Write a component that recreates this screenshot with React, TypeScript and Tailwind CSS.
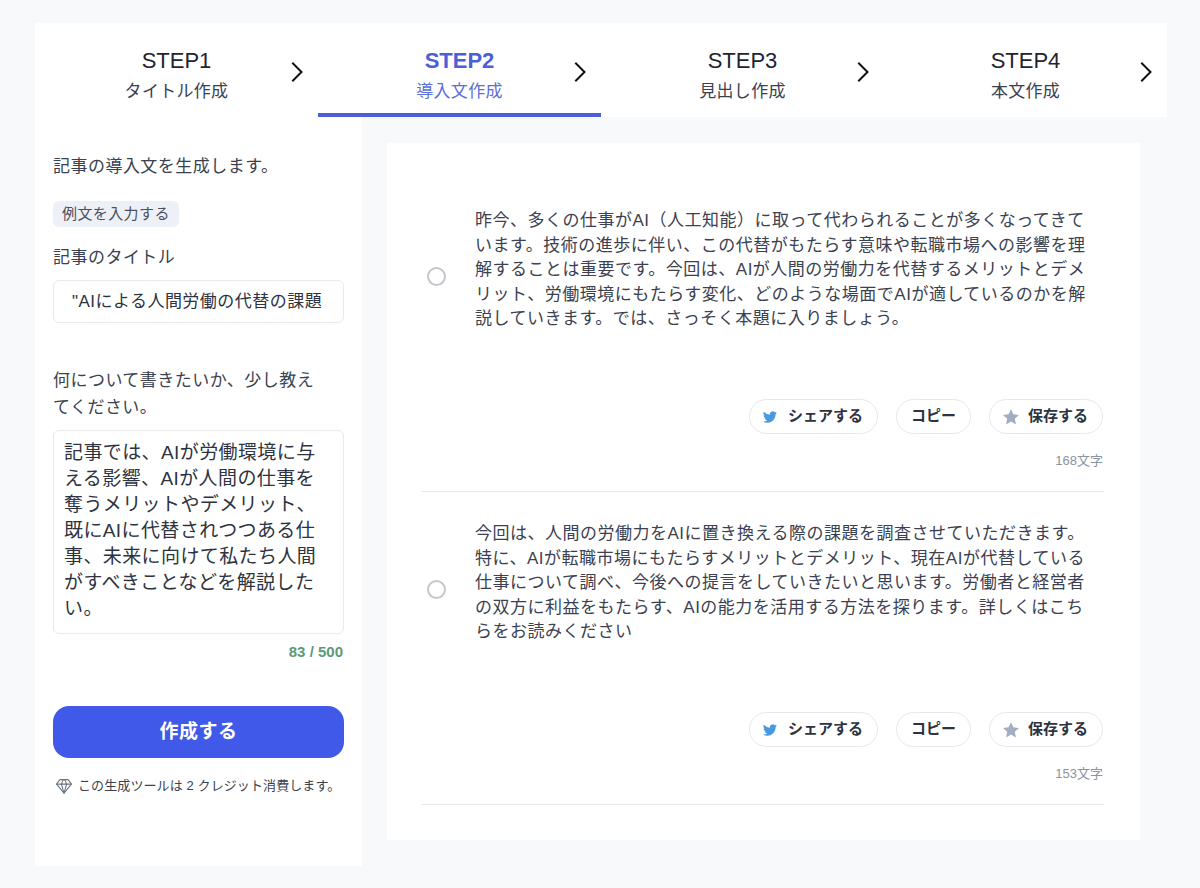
import React from "react";

const font = { fontFamily: '"Liberation Sans","Noto Sans CJK JP",sans-serif' };

function Twitter() {
  return (
    <svg viewBox="0 0 24 24" className="w-[14px] h-[14px] ml-[0.5px] mr-[1.5px]" fill="#4a99e0">
      <path d="M23.95 4.57a10 10 0 0 1-2.82.77 4.96 4.96 0 0 0 2.16-2.72c-.95.55-2 .96-3.12 1.19a4.92 4.92 0 0 0-8.38 4.48A13.98 13.98 0 0 1 1.64 3.16a4.92 4.92 0 0 0 1.52 6.57 4.9 4.9 0 0 1-2.23-.61v.06a4.92 4.92 0 0 0 3.95 4.83 4.99 4.99 0 0 1-2.21.08 4.94 4.94 0 0 0 4.6 3.42A9.87 9.87 0 0 1 0 19.54a13.94 13.94 0 0 0 7.55 2.21c9.05 0 14-7.5 14-13.98 0-.21 0-.42-.02-.63a9.94 9.94 0 0 0 2.46-2.55z" />
    </svg>
  );
}

function Star() {
  return (
    <svg viewBox="2 2 20 20" className="w-[16px] h-[16px]" fill="#a0aec0">
      <path d="M12 2.200l2.950 6.500 7.050.8-5.250 4.750 1.450 7L12 17.700l-6.200 3.550 1.450-7L2 9.500l7.050-.8z" />
    </svg>
  );
}

function Chevron() {
  return (
    <svg viewBox="0 0 24 24" className="w-[24px] h-[24px]" fill="none" stroke="#111" strokeWidth="2" strokeLinecap="square" strokeLinejoin="miter">
      <path d="M8 3.500l8.500 8.500L8 20.500" />
    </svg>
  );
}

function Diamond() {
  return (
    <svg viewBox="0 0 24 24" className="w-[18px] h-[18px] shrink-0" fill="none" stroke="#6b7280" strokeWidth="1.4" strokeLinejoin="round">
      <path d="M6.500 3.500h11L22 9.500 12 21.500 2 9.500z" />
      <path d="M2 9.500h20M8.500 9.500L12 21.500l3.500-12M8.500 9.500L11 3.500M15.500 9.500L13 3.500" />
    </svg>
  );
}

function Step({ n, label, active }: { n: string; label: string; active?: boolean }) {
  return (
    <div className={`relative flex-1 h-full flex flex-col items-center pt-[22px] ${active ? "border-b-4 border-[#4a5fd8]" : ""}`}>
      <div className={`text-[22px] leading-[32px] ${active ? "font-bold text-[#4a5fd8]" : "text-[#1f2430]"}`}>{n}</div>
      <div className={`mt-[2px] text-[17px] leading-[26px] tracking-[0.3px] ${active ? "text-[#5a6fd8]" : "text-[#3b4150]"}`}>{label}</div>
      <div className="absolute right-[9.5px] top-[37px]"><Chevron /></div>
    </div>
  );
}

function Pill({ children, className }: { children: React.ReactNode; className: string }) {
  return (
    <button className={`h-[35px] rounded-full border border-[#e5e8ee] bg-white flex items-center gap-[9px] text-[15px] font-bold text-[#2d3340] ${className}`}>
      {children}
    </button>
  );
}

function Result({ text, count }: { text: React.ReactNode; count: string }) {
  return (
    <div className="h-[313px] border-b border-[#e5e7eb] flex flex-col">
      <div className="flex items-start h-[220px] shrink-0">
        <div className="w-[53px] shrink-0 pt-[88px]">
          <div className="ml-[5px] w-[19px] h-[19px] rounded-full border-2 border-[#c4c7cc] bg-white" />
        </div>
        <div className="pt-[30px] text-[17px] leading-[24.6px] tracking-[0.5px] text-[#3b4150] whitespace-nowrap">{text}</div>
      </div>
      <div className="flex justify-end gap-[18px] shrink-0 pr-[1px]">
        <Pill className="pl-[13px] pr-[14px]"><Twitter />シェアする</Pill>
        <Pill className="px-[14px]">コピー</Pill>
        <Pill className="pl-[13px] pr-[14px]"><Star />保存する</Pill>
      </div>
      <div className="text-right text-[13px] leading-[16px] text-[#8b93a1] mt-[19px] pr-[1px]">{count}</div>
    </div>
  );
}

export default function App() {
  return (
    <div style={font} className="w-[1200px] h-[888px] bg-[#f8f9fb] pt-[23px] pl-[35px] overflow-hidden">
      <div className="w-[1132px] h-[94px] bg-white flex">
        <Step n="STEP1" label="タイトル作成" />
        <Step n="STEP2" label="導入文作成" active />
        <Step n="STEP3" label="見出し作成" />
        <Step n="STEP4" label="本文作成" />
      </div>
      <div className="flex w-[1132px]">
        <aside className="w-[327px] h-[749px] bg-white px-[18px] pt-[38px] text-[#3b4150]">
          <p className="text-[17px] leading-[24px] tracking-[0.47px]">記事の導入文を生成します。</p>
          <div className="mt-[22px] inline-block h-[26px] px-[9px] rounded-[6px] bg-[#edf0f6] text-[15px] leading-[26px] tracking-[0.4px] text-[#4a5060]">例文を入力する</div>
          <p className="mt-[19px] text-[17px] leading-[24px] tracking-[0.47px]">記事のタイトル</p>
          <div className="mt-[10px] h-[43px] w-[291px] border border-[#e8eaee] rounded-[6px] pl-[18px] text-[17px] leading-[41px] tracking-[0.47px] text-[#2d3340] whitespace-nowrap">"AIによる人間労働の代替の課題</div>
          <p className="mt-[44px] text-[17px] leading-[27px] tracking-[0.47px] w-[270px]">何について書きたいか、少し教えてください。</p>
          <div className="mt-[9px] h-[204px] w-[291px] border border-[#e8eaee] rounded-[6px] pl-[10px] pt-[9px] text-[19px] leading-[26px] tracking-[0.4px] text-[#2d3340] whitespace-nowrap">
            記事では、AIが労働環境に与<br />える影響、AIが人間の仕事を<br />奪うメリットやデメリット、<br />既にAIに代替されつつある仕<br />事、未来に向けて私たち人間<br />がすべきことなどを解説した<br />い。
          </div>
          <div className="mt-[9px] w-[291px] text-right text-[15px] leading-[18px] font-bold text-[#5c9a78] pr-[1px]">83 / 500</div>
          <button className="mt-[45px] w-[291px] h-[52px] rounded-[16px] bg-[#4159e8] text-white text-[19px] font-bold tracking-[0.5px]">作成する</button>
          <div className="mt-[19px] ml-[2px] flex items-center gap-[5px] text-[13px] leading-[18px] tracking-[0.1px] text-[#3b4150] whitespace-nowrap">
            <Diamond />この生成ツールは 2 クレジット消費します。
          </div>
        </aside>
        <main className="ml-[25px] mt-[26px] w-[753px] h-[697px] bg-white pl-[35px] pr-[36px] pt-[36px]">
          <Result
            count="168文字"
            text={<>昨今、多くの仕事がAI（人工知能）に取って代わられることが多くなってきて<br />います。技術の進歩に伴い、この代替がもたらす意味や転職市場への影響を理<br />解することは重要です。今回は、AIが人間の労働力を代替するメリットとデメ<br />リット、労働環境にもたらす変化、どのような場面でAIが適しているのかを解<br />説していきます。では、さっそく本題に入りましょう。</>}
          />
          <Result
            count="153文字"
            text={<>今回は、人間の労働力をAIに置き換える際の課題を調査させていただきます。<br />特に、AIが転職市場にもたらすメリットとデメリット、現在AIが代替している<br />仕事について調べ、今後への提言をしていきたいと思います。労働者と経営者<br />の双方に利益をもたらす、AIの能力を活用する方法を探ります。詳しくはこち<br />らをお読みください</>}
          />
        </main>
      </div>
    </div>
  );
}
